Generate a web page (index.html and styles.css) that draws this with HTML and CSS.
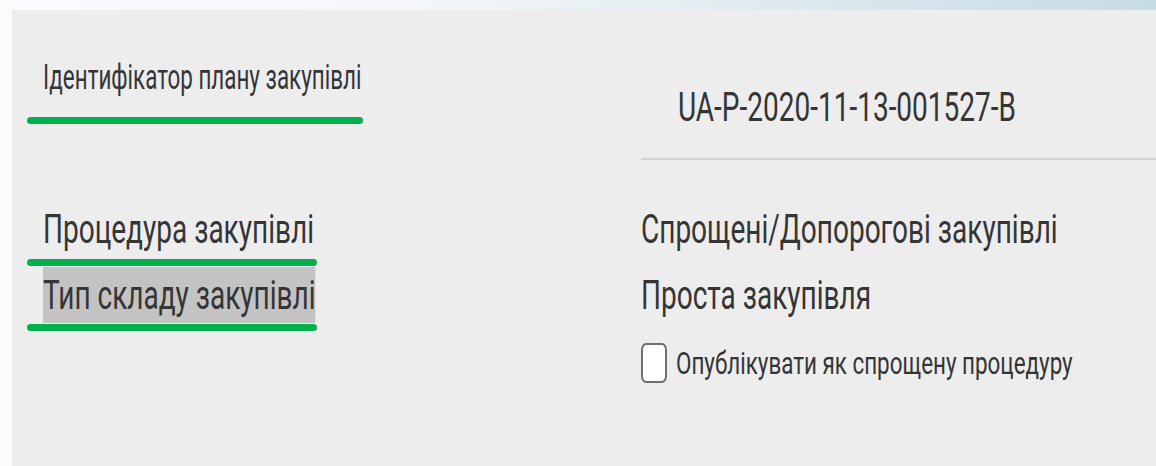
FILE: index.html
```html
<!DOCTYPE html>
<html lang="uk">
<head>
<meta charset="utf-8">
<title>План закупівлі</title>
<link rel="stylesheet" href="styles.css">
</head>
<body>
<main class="panel">
  <div class="cell">
    <span class="label-small t">Ідентифікатор плану закупівлі</span>
    <div class="mark mark-first"></div>
  </div>
  <div class="cell cell-value">
    <div class="ident"><span class="t">UA-P-2020-11-13-001527-B</span></div>
    <div class="divider"></div>
  </div>

  <div class="cell">
    <span class="label t row2">Процедура закупівлі</span>
    <div class="mark mark-second"></div>
  </div>
  <div class="cell cell-value">
    <span class="value t row2">Спрощені/Допорогові закупівлі</span>
  </div>

  <div class="cell">
    <span class="label t selected">Тип складу закупівлі</span>
    <div class="mark mark-third"></div>
  </div>
  <div class="cell cell-value">
    <span class="value t row3">Проста закупівля</span>
  </div>

  <div class="cell"></div>
  <div class="cell cell-value">
    <label class="check">
      <span class="box"></span>
      <span class="check-text t">Опублікувати як спрощену процедуру</span>
    </label>
  </div>
</main>
</body>
</html>
```

FILE: styles.css
```css
html, body {
  margin: 0;
  padding: 0;
}

body {
  width: 1156px;
  height: 466px;
  overflow: hidden;
  background: linear-gradient(90deg, #fafbfc 0%, #f5f7f9 35%, #e7eff2 55%, #c6dce3 100%);
  font-family: Roboto, "Noto Sans", sans-serif;
  color: #353535;
}

.panel {
  margin: 10px 0 0 12px;
  height: 456px;
  background: #ededed;
  display: grid;
  grid-template-columns: 598px 1fr;
  grid-template-rows: 150px 106px 65px 1fr;
  padding-left: 31px;
}

.cell {
  display: flex;
  flex-direction: column;
  align-items: flex-start;
  min-width: 0;
}

.cell-value {
  overflow: hidden;
}

/* narrow lettering */
.t {
  display: inline-block;
  white-space: nowrap;
  transform: scaleX(0.7);
  transform-origin: 0 50%;
}

.label,
.value {
  font-size: 40px;
  line-height: 40px;
}

.label-small {
  font-size: 35px;
  line-height: 35px;
  margin-top: 49.5px;
  transform: scaleX(0.64);
}

.row2 {
  margin-top: 50px;
}

.row3 {
  margin-top: 10px;
}

.selected {
  margin-top: 1px;
  height: 56px;
  line-height: 54px;
  padding-top: 2px;
  box-sizing: border-box;
  background: #c3c3c3;
}

/* green underline markers */
.mark {
  height: 7px;
  border-radius: 4px;
  background: #03b04e;
  margin-left: -16px;
}

.mark-first {
  margin-top: 22.5px;
  width: 336px;
}

.mark-second {
  margin-top: 9px;
  width: 290px;
}

.mark-third {
  margin-top: 1px;
  width: 290px;
}

.ident {
  margin-top: 78px;
  padding-left: 37px;
  font-size: 40px;
  line-height: 40px;
}

.divider {
  align-self: stretch;
  margin-top: 30px;
  height: 2px;
  background: #d2d2d2;
  box-shadow: 0 1px 1px rgba(0, 0, 0, 0.04);
}

.check {
  display: flex;
  align-items: flex-start;
  margin-top: 12px;
}

.box {
  flex: none;
  width: 26px;
  height: 40px;
  box-sizing: border-box;
  border: 2px solid #6f6f6f;
  border-radius: 5px / 7px;
  background: #fff;
}

.check-text {
  margin-left: 9px;
  font-size: 32px;
  line-height: 40px;
}
```
